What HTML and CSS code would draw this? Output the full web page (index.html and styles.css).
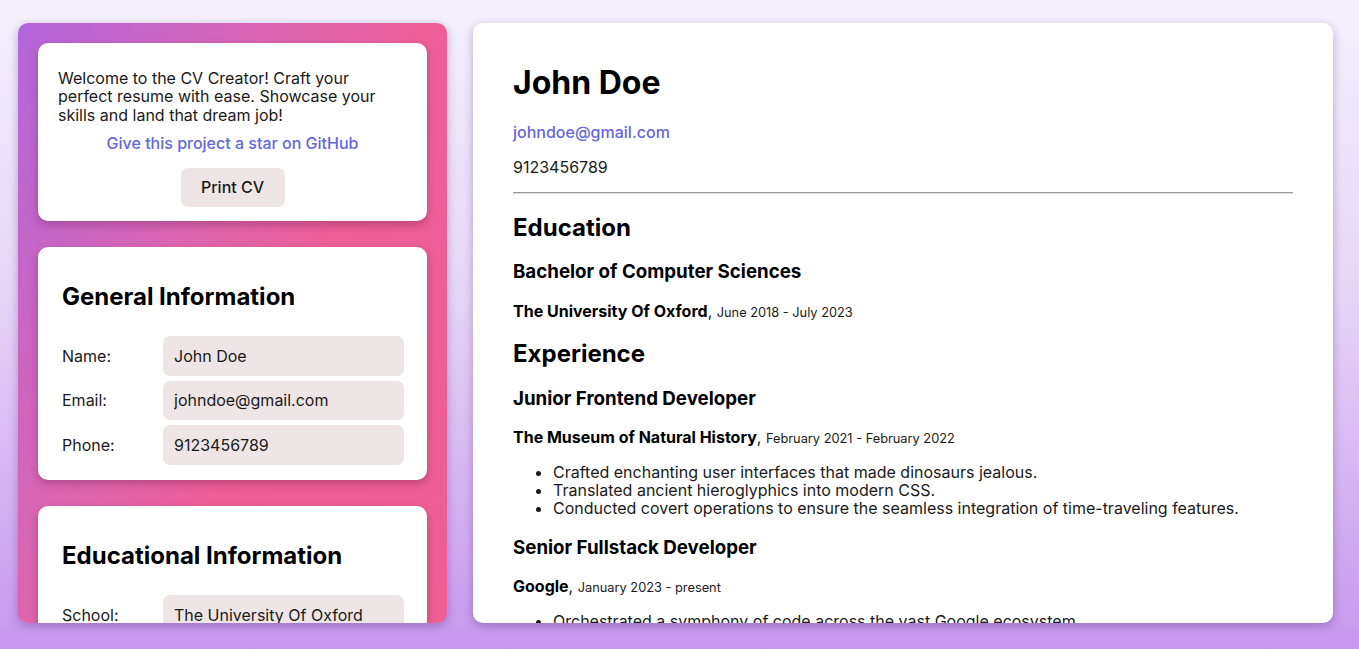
FILE: index.html
```html
<!DOCTYPE html>
<html lang="en">
<head>
<meta charset="utf-8">
<title>CV Creator</title>
<link rel="stylesheet" href="styles.css">
</head>
<body>
<div class="app">
  <aside class="editor">
    <section class="card intro">
      <p>Welcome to the CV Creator! Craft your perfect resume with ease. Showcase your skills and land that dream job!</p>
      <a class="star" href="#">Give this project a star on GitHub</a>
      <div class="print-wrap"><button class="btn">Print CV</button></div>
    </section>
    <section class="card form-card">
      <h2>General Information</h2>
      <div class="rows">
        <label class="row"><span>Name:</span><input class="field" value="John Doe"></label>
        <label class="row"><span>Email:</span><input class="field" value="johndoe@gmail.com"></label>
        <label class="row"><span>Phone:</span><input class="field" value="9123456789"></label>
      </div>
    </section>
    <section class="card form-card">
      <h2>Educational Information</h2>
      <div class="rows">
        <label class="row"><span>School:</span><input class="field" value="The University Of Oxford"></label>
        <label class="row"><span>Degree:</span><input class="field" value="Bachelor of Computer Sciences"></label>
        <label class="row"><span>Start:</span><input class="field" value="June 2018"></label>
        <label class="row"><span>End:</span><input class="field" value="July 2023"></label>
      </div>
    </section>
  </aside>
  <main class="cv">
    <h1>John Doe</h1>
    <p><a class="mail" href="#">johndoe@gmail.com</a></p>
    <p>9123456789</p>
    <hr>
    <h2>Education</h2>
    <h3>Bachelor of Computer Sciences</h3>
    <p><b>The University Of Oxford</b>, <span class="date">June 2018 - July 2023</span></p>
    <h2>Experience</h2>
    <h3>Junior Frontend Developer</h3>
    <p><b>The Museum of Natural History</b>, <span class="date">February 2021 - February 2022</span></p>
    <ul>
      <li>Crafted enchanting user interfaces that made dinosaurs jealous.</li>
      <li>Translated ancient hieroglyphics into modern CSS.</li>
      <li>Conducted covert operations to ensure the seamless integration of time-traveling features.</li>
    </ul>
    <h3>Senior Fullstack Developer</h3>
    <p><b>Google</b>, <span class="date">January 2023 - present</span></p>
    <ul>
      <li>Orchestrated a symphony of code across the vast Google ecosystem.</li>
      <li>Tamed wild algorithms and trained them to fetch search results.</li>
    </ul>
  </main>
</div>
</body>
</html>
```

FILE: styles.css
```css
* { box-sizing: border-box; }
html, body { height: 100%; }
body {
  margin: 0;
  font-family: Inter, "Noto Sans", sans-serif;
  line-height: 1.15;
  color: #1a1a1a;
  background: linear-gradient(to bottom, #f4f1fc 0%, #e6d6f7 45%, #c797ee 100%);
  overflow: hidden;
}
.app {
  display: flex;
  gap: 26px;
  padding: 23px 0 0 18px;
  align-items: flex-start;
}
.editor {
  width: 429px;
  height: 600px;
  flex: none;
  padding: 20px;
  border-radius: 10px;
  overflow: hidden;
  background: linear-gradient(115deg, #b266dc 0%, #d965b2 35%, #ec5f97 58%, #ef5e93 100%);
  box-shadow: 0 3px 10px rgba(60, 20, 90, 0.3);
}
.card {
  background: #fff;
  border-radius: 10px;
  box-shadow: 0 4px 8px rgba(60, 0, 40, 0.25);
  margin-bottom: 26px;
}
.intro { padding: 10px 20px 14px; }
.intro p { margin: 16px 0 10px; font-size: 16px; }
.star {
  display: block;
  text-align: center;
  color: #6466e0;
  text-decoration: none;
  font-size: 16px;
  font-weight: 500;
}
.print-wrap { display: flex; justify-content: center; margin-top: 15px; }
.btn {
  font: inherit;
  font-size: 16px;
  font-weight: 500;
  color: #1a1a1a;
  width: 104px;
  height: 39px;
  border: none;
  border-radius: 7px;
  background: #eee6e6;
}
.form-card { padding: 17px 23px 15px 24px; }
.form-card h2 { font-size: 24px; margin: 19.92px 0 0; color: #000; }
.rows { display: flex; flex-direction: column; gap: 5px; margin-top: 25px; }
.row { display: grid; grid-template-columns: 101px 1fr; align-items: center; font-size: 16px; }
.field {
  font: inherit;
  font-size: 16px;
  color: #1a1a1a;
  height: 39.5px;
  border: none;
  border-radius: 7px;
  background: #eee6e6;
  padding: 0 11px;
  width: 100%;
}
.cv {
  width: 860px;
  height: 600px;
  flex: none;
  background: #fff;
  border-radius: 10px;
  padding: 0 40px;
  overflow: hidden;
  box-shadow: 0 3px 10px rgba(60, 20, 90, 0.3);
  display: flow-root;
}
.cv h1 { font-size: 32px; margin: 42px 0 21.44px; color: #000; }
.cv h2 { font-size: 24px; margin: 19.92px 0; color: #000; }
.cv h3 { font-size: 18.72px; margin: 18.72px 0; color: #000; }
.cv p { margin: 16px 0; font-size: 16px; }
.cv b { color: #000; }
.cv hr { border: none; border-top: 1px solid #999; border-bottom: 1px solid #ddd; margin: 8px 0; }
.mail { color: #6466e0; text-decoration: none; font-weight: 500; }
.date { font-size: 12.8px; }
.cv ul { margin: 16px 0; padding-left: 40px; font-size: 16px; }
```
